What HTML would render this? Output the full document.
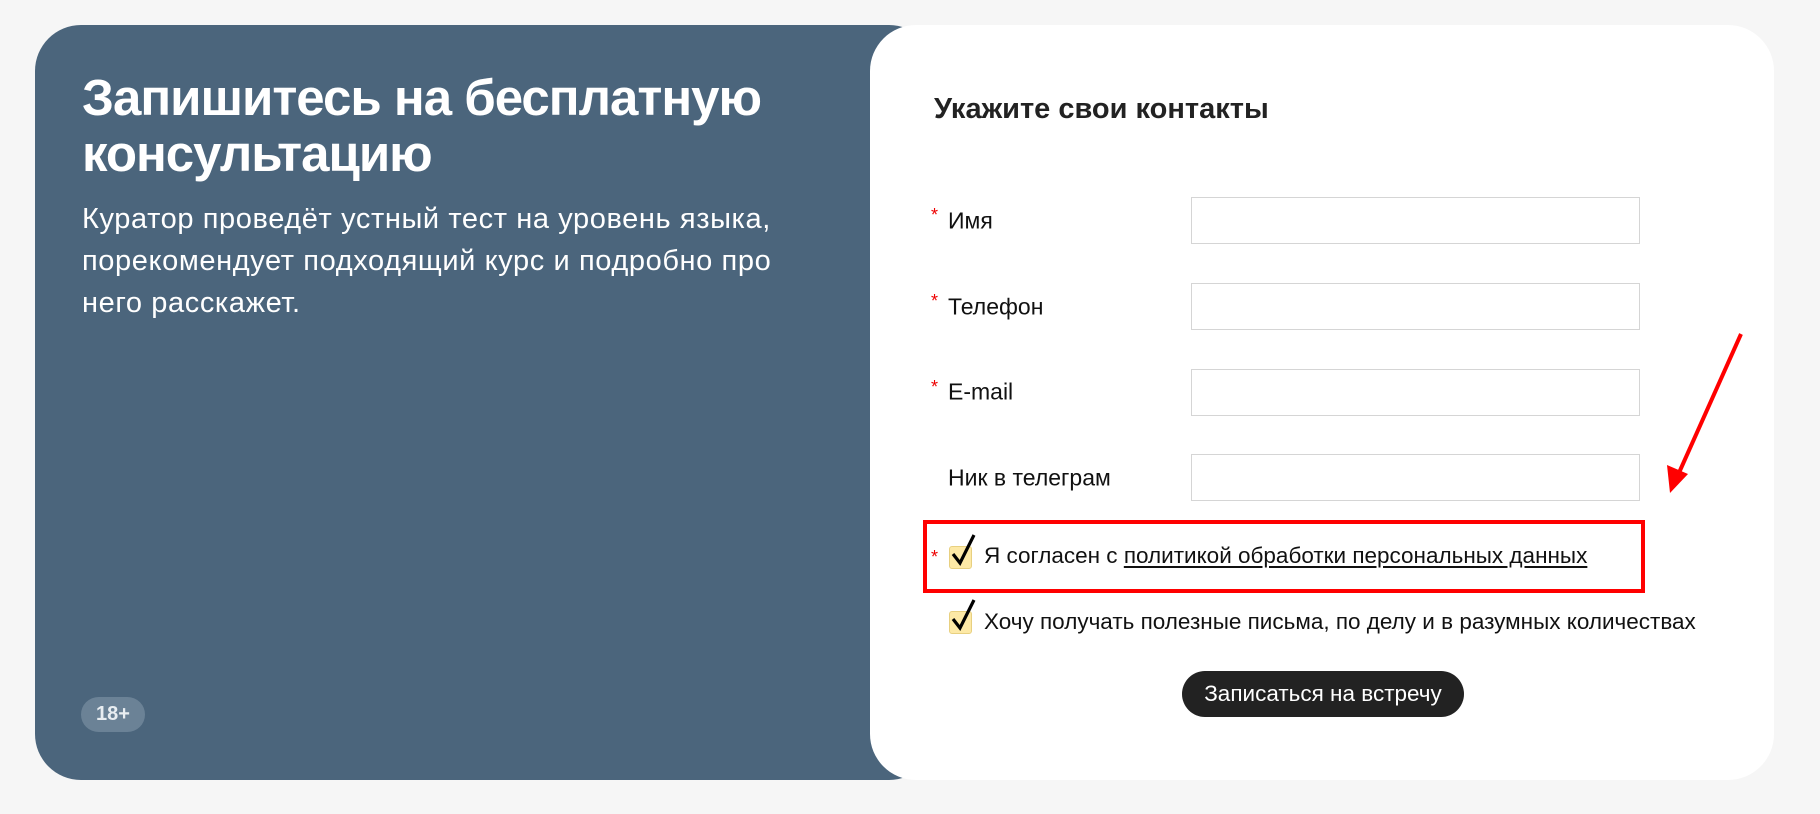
<!DOCTYPE html>
<html><head><meta charset="utf-8"><style>
body{margin:0;width:1820px;height:814px;background:#f6f6f6;position:relative;font-family:"Liberation Sans",Arial,sans-serif;overflow:hidden}
.dark{position:absolute;left:35px;top:25px;width:900px;height:755px;background:#4b657c;border-radius:46px}
.white{position:absolute;left:870px;top:25px;width:904px;height:755px;background:#fff;border-radius:46px}
h1{position:absolute;left:82px;top:70px;margin:0;color:#fff;font-size:51px;font-weight:bold;line-height:56px;letter-spacing:-1px;width:800px}
.sub{position:absolute;left:82px;top:198px;color:#fff;font-size:29px;line-height:42px;width:800px;letter-spacing:0.6px;white-space:nowrap}
.badge{position:absolute;left:81px;top:697px;width:64px;height:35px;border-radius:18px;background:#6b8296;color:#e8edf1;font-weight:bold;font-size:20px;line-height:35px;text-align:center}
h2{position:absolute;left:934px;top:93px;margin:0;font-size:29px;color:#222;font-weight:bold}
.lab{position:absolute;left:948px;font-size:23px;color:#111;transform:translateY(-50%)}
.ast{position:absolute;left:931px;color:#e00;font-size:18px}
.inp{position:absolute;left:1191px;width:449px;height:47px;border:1px solid #d5d5d5;box-sizing:border-box}
.cb{position:absolute;left:949px;width:23px;height:23px;background:#fde9a6;border:1px solid #e8d080;border-radius:3px;box-sizing:border-box}
.cb svg{position:absolute;left:-1px;top:-14px}
.ct{position:absolute;left:984px;font-size:22.5px;color:#111;transform:translateY(-50%);white-space:nowrap}
.ct u{text-decoration:underline;text-underline-offset:3px}
.red{position:absolute;left:923px;top:520px;width:722px;height:73px;border:4px solid #f00;box-sizing:border-box}
.btn{position:absolute;left:1182px;top:671px;width:282px;height:46px;border-radius:23px;background:#222;color:#fff;font-size:22.5px;line-height:46px;text-align:center}
</style></head><body>
<div class="dark"></div>
<h1>Запишитесь на бесплатную<br>консультацию</h1>
<div class="sub">Куратор проведёт устный тест на уровень языка,<br>порекомендует подходящий курс и подробно про<br>него расскажет.</div>
<div class="badge">18+</div>
<div class="white"></div>
<h2>Укажите свои контакты</h2>
<div class="ast" style="top:205px">*</div><div class="lab" style="top:221px">Имя</div><div class="inp" style="top:197px"></div>
<div class="ast" style="top:291px">*</div><div class="lab" style="top:307px">Телефон</div><div class="inp" style="top:283px"></div>
<div class="ast" style="top:377px">*</div><div class="lab" style="top:392px">E-mail</div><div class="inp" style="top:369px"></div>
<div class="lab" style="top:478px">Ник в телеграм</div><div class="inp" style="top:454px"></div>
<div class="red"></div>
<div class="ast" style="top:547px">*</div>
<div class="cb" style="top:546px"><svg width="28" height="34" viewBox="0 0 28 34"><path d="M4 21 L11 30 L25 2" fill="none" stroke="#000" stroke-width="3.2"/></svg></div>
<div class="ct" style="top:556px">Я согласен с <u>политикой обработки персональных данных</u></div>
<div class="cb" style="top:611px"><svg width="28" height="34" viewBox="0 0 28 34"><path d="M4 21 L11 30 L25 2" fill="none" stroke="#000" stroke-width="3.2"/></svg></div>
<div class="ct" style="top:622px">Хочу получать полезные письма, по делу и в разумных количествах</div>
<div class="btn">Записаться на встречу</div>
<svg style="position:absolute;left:0;top:0" width="1820" height="814"><line x1="1741" y1="334" x2="1678" y2="475" stroke="#f00" stroke-width="4"/><path d="M1670 493 L1667 465 L1688 474 Z" fill="#f00"/></svg>
</body></html>
